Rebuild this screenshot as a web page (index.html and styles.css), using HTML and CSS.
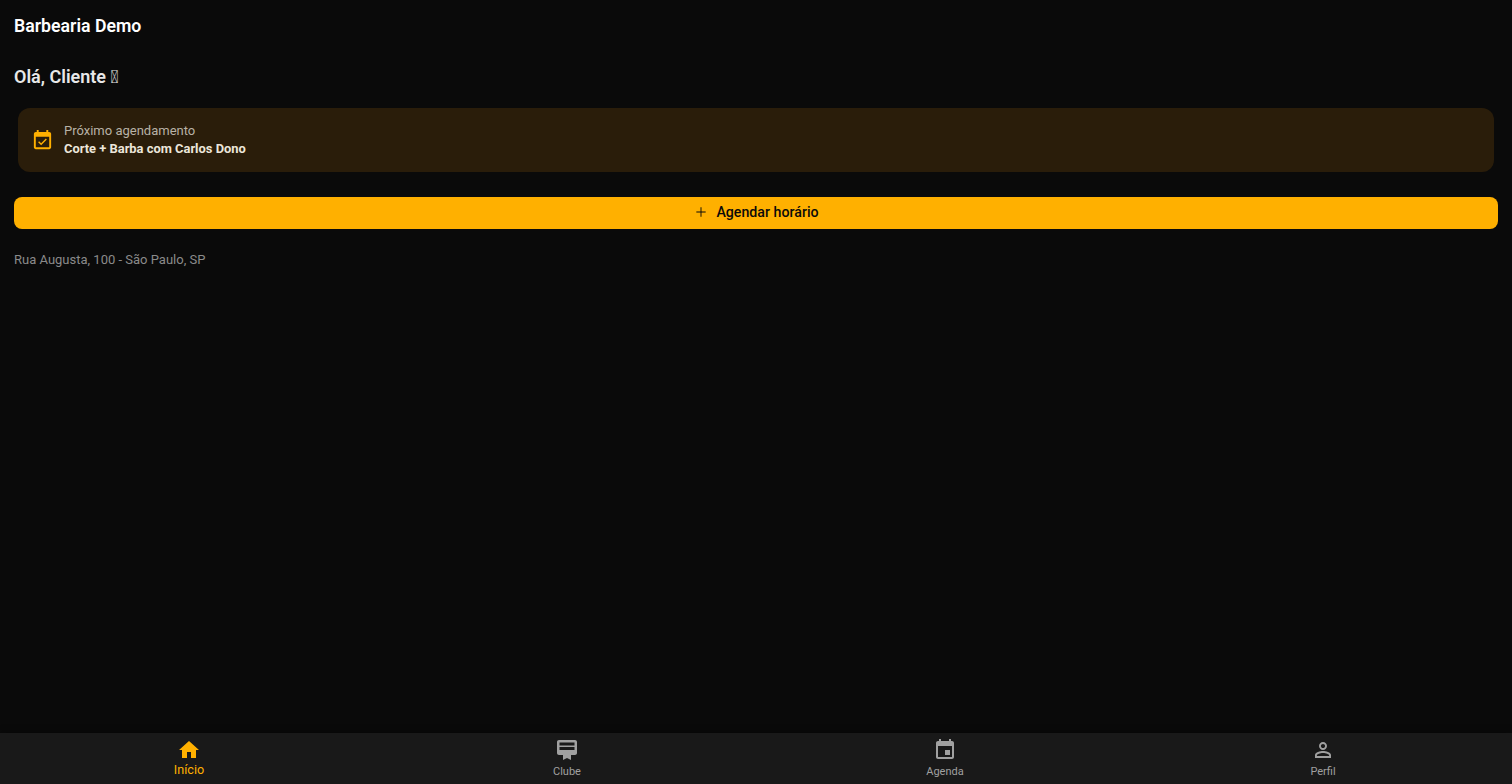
FILE: index.html
```html
<!DOCTYPE html>
<html lang="pt-BR">
<head>
  <meta charset="UTF-8" />
  <meta name="viewport" content="width=device-width, initial-scale=1.0"/>
  <title>Barbearia Demo</title>
  <link rel="stylesheet" href="styles.css">
</head>
<body>
  <header class="app-bar">Barbearia Demo</header>

  <main class="content">
    <h2 class="greeting">Olá, Cliente &#x10FFFD;</h2>

    <div class="next-card">
      <svg class="next-icon" viewBox="0 0 24 24"><path d="M16.53 11.06L15.47 10l-4.88 4.88-2.12-2.12-1.06 1.06L10.59 17l5.94-5.94zM19 3h-1V1h-2v2H8V1H6v2H5c-1.11 0-1.99.9-1.99 2L3 19c0 1.1.89 2 2 2h14c1.1 0 2-.9 2-2V5c0-1.1-.9-2-2-2zm0 16H5V8h14v11z"/></svg>
      <div>
        <div class="next-label">Próximo agendamento</div>
        <div class="next-title">Corte + Barba com Carlos Dono</div>
      </div>
    </div>

    <button class="btn-book">
      <svg class="btn-icon" viewBox="0 0 24 24"><path d="M19 12.7h-6.3V19h-1.4v-6.3H5v-1.4h6.3V5h1.4v6.3H19z"/></svg>
      Agendar horário
    </button>

    <p class="address">Rua Augusta, 100 - São Paulo, SP</p>
  </main>

  <nav class="bottom-nav">
    <a class="nav-item active">
      <svg viewBox="0 0 24 24"><path d="M10 20v-6h4v6h5v-8h3L12 3 2 12h3v8z"/></svg>
      <span>Início</span>
    </a>
    <a class="nav-item">
      <svg viewBox="0 0 24 24"><path fill-rule="evenodd" d="M20 2H4c-1.11 0-2 .89-2 2v11c0 1.11.89 2 2 2h4v5l4-2 4 2v-5h4c1.11 0 2-.89 2-2V4c0-1.11-.89-2-2-2zM4.5 4.5h15v3h-15zm0 4.5h15v3h-15z"/></svg>
      <span>Clube</span>
    </a>
    <a class="nav-item">
      <svg viewBox="0 0 24 24"><path d="M17 12h-5v5h5v-5zM16 1v2H8V1H6v2H5c-1.11 0-1.99.9-1.99 2L3 19c0 1.1.89 2 2 2h14c1.1 0 2-.9 2-2V5c0-1.1-.9-2-2-2h-1V1h-2zm3 18H5V8h14v11z"/></svg>
      <span>Agenda</span>
    </a>
    <a class="nav-item">
      <svg viewBox="0 0 24 24"><path d="M12 5.9c1.16 0 2.1.94 2.1 2.1s-.94 2.1-2.1 2.1S9.9 9.16 9.9 8s.94-2.1 2.1-2.1m0 9c2.97 0 6.1 1.46 6.1 2.1v1.1H5.9V17c0-.64 3.13-2.1 6.1-2.1M12 4C9.79 4 8 5.79 8 8s1.79 4 4 4 4-1.79 4-4-1.79-4-4-4zm0 9c-2.67 0-8 1.34-8 4v3h16v-3c0-2.66-5.33-4-8-4z"/></svg>
      <span>Perfil</span>
    </a>
  </nav>
</body>
</html>
```

FILE: styles.css
```css
* {
  box-sizing: border-box;
  margin: 0;
  padding: 0;
}

body {
  font-family: Roboto, sans-serif;
  background-color: #0a0a0a;
  color: #fff;
  height: 100vh;
  display: flex;
  flex-direction: column;
  overflow: hidden;
}

.app-bar {
  height: 52px;
  padding: 0 14px 1px;
  display: flex;
  align-items: center;
  font-size: 17.7px;
  font-weight: 600;
}

.content {
  flex: 1;
  padding: 0 14px;
}

.greeting {
  font-size: 18px;
  font-weight: 600;
  line-height: 24px;
  margin-top: 13px;
  color: #e8e8e8;
}

.next-card {
  height: 64px;
  margin: 19px 4px 0;
  padding: 0 13px;
  display: flex;
  align-items: center;
  gap: 10px;
  background-color: #2a1d0a;
  border-radius: 12px;
}

.next-icon {
  width: 23px;
  height: 23px;
  margin-top: 1px;
  fill: #ffb000;
  flex-shrink: 0;
}

.next-label {
  font-size: 13px;
  line-height: 18px;
  color: #b8b2a6;
}

.next-title {
  font-size: 12.9px;
  line-height: 18px;
  font-weight: 700;
  color: #ece6da;
}

.btn-book {
  width: 100%;
  height: 32px;
  margin-top: 25px;
  padding-bottom: 2px;
  display: flex;
  align-items: center;
  justify-content: center;
  gap: 7px;
  background-color: #ffb000;
  color: #0a0a0a;
  border: none;
  border-radius: 8px;
  font-family: Roboto, sans-serif;
  font-size: 14.2px;
  font-weight: 500;
}

.btn-icon {
  width: 16px;
  height: 16px;
  fill: #0a0a0a;
}

.address {
  margin-top: 23px;
  font-size: 13px;
  line-height: 16px;
  color: #8a8a8a;
}

.bottom-nav {
  height: 51px;
  display: flex;
  background-color: #191919;
  box-shadow: 0 -2px 6px rgba(0,0,0,0.3);
}

.nav-item {
  flex: 1;
  display: flex;
  flex-direction: column;
  align-items: center;
  padding-top: 5px;
  color: #a0a0a0;
  font-size: 11px;
  line-height: 14px;
}

.nav-item svg {
  width: 24px;
  height: 24px;
  fill: currentColor;
  margin-bottom: 3px;
}

.nav-item.active {
  color: #ffb000;
  font-size: 12.6px;
}

.nav-item.active svg {
  margin-bottom: 1px;
}
```
